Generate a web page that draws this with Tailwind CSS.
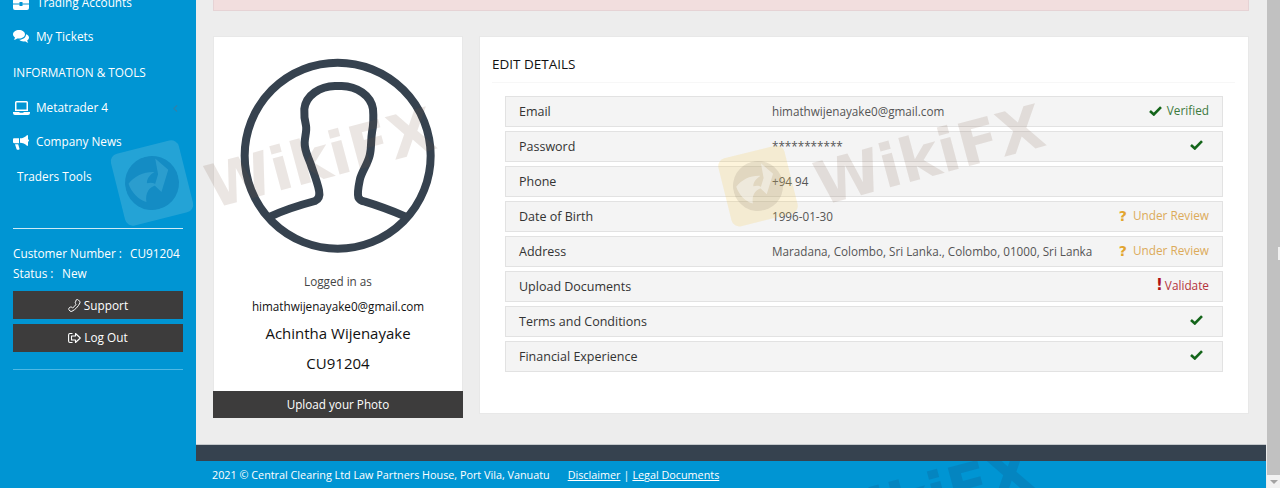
<!DOCTYPE html>
<html lang="en">
<head>
    <meta charset="UTF-8">
    <meta name="viewport" content="width=device-width, initial-scale=1.0">
    <title>Edit Details</title>
    <script src="https://cdn.jsdelivr.net/npm/@tailwindcss/browser@4"></script>
</head>
<body class="h-[488px] overflow-hidden bg-[#ededed] font-['Open_Sans',sans-serif] text-[12.500px] text-[#333]">
<div class="relative flex h-[488px] overflow-hidden">

    <!-- sidebar -->
    <aside class="w-[196px] shrink-0 bg-[#0095d3] text-[11.800px] text-white">
        <nav class="-mt-[7px] flex flex-col">
            <a class="flex h-[20px] items-center gap-[8px] pl-[13px]">
                <svg class="h-[14px] w-[16px]" viewBox="0 0 16 14" fill="#fff"><path d="M5 1h6v2h3a2 2 0 0 1 2 2v2.500H9.500V6h-3v1.500H0V5a2 2 0 0 1 2-2h3zm1.500 1.400V3h3v-.6zM0 8.500h6.500V10h3V8.500H16V12a2 2 0 0 1-2 2H2a2 2 0 0 1-2-2z"/></svg>
                <span>Trading Accounts</span>
            </a>
            <a class="mt-[14px] flex h-[20px] items-center gap-[7px] pl-[13px]">
                <svg class="h-[14px] w-[16px]" viewBox="0 0 16 14" fill="#fff"><path d="M6 0c3.300 0 6 1.900 6 4.300S9.300 8.600 6 8.600c-.6 0-1.200-.1-1.800-.2C3.200 9.200 2 9.600.8 9.700c.6-.7 1-1.400 1.200-2.200C.8 6.700 0 5.600 0 4.300 0 1.900 2.700 0 6 0z"/><path d="M13 4.200c1.800.6 3 1.900 3 3.400 0 1.200-.7 2.200-1.800 2.900.2.800.6 1.500 1.200 2.200-1.200-.1-2.400-.6-3.300-1.400-.5.100-1 .2-1.600.2-1.800 0-3.300-.7-4.200-1.700 3.700-.1 6.700-2.400 6.700-5.300z"/></svg>
                <span>My Tickets</span>
            </a>
            <div class="mt-[15px] h-[20px] pl-[13px] leading-[20px]">INFORMATION &amp; TOOLS</div>
            <a class="relative mt-[16px] flex h-[20px] items-center gap-[6px] pl-[13px]">
                <svg class="h-[14px] w-[17px]" viewBox="0 0 17 14" fill="#fff"><path fill-rule="evenodd" d="M3.500 0h10A1.500 1.500 0 0 1 15 1.500V10H2V1.500A1.500 1.500 0 0 1 3.500 0zM3.500 1.400V8.600h10V1.400z"/><path d="M0 11h6.500v.7h4V11H17v1a2 2 0 0 1-2 2H2a2 2 0 0 1-2-2z"/></svg>
                <span>Metatrader 4</span>
                <svg class="absolute left-[173px] top-[7px] h-[7px] w-[5px]" viewBox="0 0 5 7" fill="none" stroke="#2c83ad" stroke-width="1.300"><path d="M4 .5 1 3.500 4 6.500"/></svg>
            </a>
            <a class="mt-[14px] flex h-[20px] items-center gap-[7px] pl-[13px]">
                <svg class="h-[15px] w-[16px]" viewBox="0 0 16 15" fill="#fff"><path fill-rule="evenodd" d="M14.200 0c.5 0 .8.400.8.900v3.300c.6.200 1 .7 1 1.300s-.4 1.100-1 1.300v3.300c0 .5-.3.900-.8.900C12 8.400 9.700 7.700 7 7.700V3.300C9.700 3.300 12 2.600 14.200 0z"/><path d="M0 4.500c0-.7.500-1.200 1.200-1.200H6v5H1.200C.5 8.300 0 7.800 0 7.100zM2 9.200h3.200l1.300 4.600c.1.500-.2.900-.7.900H4.300c-.3 0-.6-.2-.7-.5z"/></svg>
                <span>Company News</span>
            </a>
            <div class="mt-[14px] h-[20px] pl-[17px] leading-[20px]">Traders Tools</div>
        </nav>

        <div class="mx-[13px] mt-[42px] border-t border-[#cfeaf6]"></div>

        <div class="mt-[15px] flex h-[20px] items-center pl-[13px] whitespace-nowrap">
            <span class="w-[117px]">Customer Number :</span><span>CU91204</span>
        </div>
        <div class="flex h-[20px] items-center pl-[13px] whitespace-nowrap">
            <span class="w-[49px]">Status :</span><span>New</span>
        </div>

        <div class="mx-[13px] mt-[7px] flex flex-col gap-[5px]">
            <a class="flex h-[28px] items-center justify-center gap-[3px] bg-[#3d3c3c] pt-[1px]">
                <svg class="h-[13px] w-[13px]" viewBox="0 0 13 13" fill="none" stroke="#fff" stroke-width="1"><path d="M8.300.8c.7-.5 1.400-.4 2 .1l1.300 1.300c.5.500.6 1.200.3 1.800-1.800 3.600-4.400 6.500-8 8.300-.6.300-1.400.2-1.900-.3L1 10.800c-.5-.5-.5-1.200 0-1.700l1.400-1c.5-.3 1.100-.3 1.500.2l.6.7c1.500-.9 2.700-2.200 3.600-3.800l-.6-.7c-.4-.5-.4-1.100 0-1.600z"/></svg>
                <span>Support</span>
            </a>
            <a class="flex h-[28px] items-center justify-center gap-[3px] bg-[#3d3c3c]">
                <svg class="h-[12px] w-[13px]" viewBox="0 0 13 12" fill="none" stroke="#fff" stroke-width="1.100"><path d="M4.500 1.500H2A1.500 1.500 0 0 0 .6 3v6A1.500 1.500 0 0 0 2 10.500h2.500"/><path stroke-linejoin="round" d="M7.500 1.500 12.300 6 7.500 10.500V8H3.500V4h4z"/></svg>
                <span>Log Out</span>
            </a>
        </div>

        <div class="mx-[13px] mt-[17px] border-t border-[#4fb8e4]"></div>
    </aside>

    <!-- main column -->
    <div class="flex h-[488px] w-[1070px] shrink-0 flex-col">
        <div class="mx-[17px] h-[11px] shrink-0 border border-t-0 border-[#e6d3d5] bg-[#f2dede]"></div>

        <div class="mt-[25px] flex h-[382px] shrink-0 items-start gap-[16px] pl-[17px]">
            <!-- profile card -->
            <section class="flex h-[382px] w-[250px] shrink-0 flex-col items-center border border-b-0 border-[#e8e8e8] bg-white">
                <svg class="mt-[20px] -translate-y-px h-[200px] w-[200px]" viewBox="99 81 600 600" fill="none" stroke="#36424f" stroke-width="24" stroke-linejoin="round" stroke-linecap="round">
                    <circle cx="398" cy="380" r="279"/>
                    <path d="M197 562C240 542 285 528 330 516C342 510 345 498 342 484C336 455 325 430 317 405C308 380 298 365 299 340C300 320 306 305 303 290C298 272 297 258 298 240C303 198 345 172 390 171H410C455 172 497 198 504 240C506 265 505 290 501 310C497 335 500 355 494 380C488 405 472 425 465 450C461 470 456 490 460 505C463 512 470 516 480 518C520 530 560 545 600 562"/>
                </svg>
                <p class="mt-[14px] h-[20px] text-[11.700px] leading-[20px] text-[#444]">Logged in as</p>
                <p class="mt-[5px] h-[20px] text-[11.700px] leading-[20px] text-[#111]">himathwijenayake0@gmail.com</p>
                <p class="mt-[5px] h-[24px] text-[15px] leading-[24px] text-[#111]">Achintha Wijenayake</p>
                <p class="mt-[6px] h-[24px] text-[15px] leading-[24px] text-[#111]">CU91204</p>
                <a class="-mx-px mt-[auto] flex h-[27px] w-[250px] shrink-0 items-center justify-center bg-[#3d3c3c] text-[11.700px] text-white">Upload your Photo</a>
            </section>

            <!-- edit details card -->
            <section class="h-[378px] w-[770px] shrink-0 border border-[#e8e8e8] bg-white pl-[12px]">
                <h2 class="flex h-[46px] w-[743px] items-end border-b border-[#f7f7f7] pb-[8px] text-[13.500px] leading-[20px] text-[#111]">EDIT DETAILS</h2>
                <ul class="mt-[13px] ml-[13px] flex w-[718px] flex-col gap-[4px]">
                    <li class="flex h-[31px] items-center border border-[#e2e2e2] bg-[#f4f4f4] px-[13px]">
                        <span class="w-[253px] pt-[2px]">Email</span>
                        <span class="text-[11.700px] text-[#555]">himathwijenayake0@gmail.com</span>
                        <span class="mb-[2px] ml-auto flex items-center gap-[5px] text-[11.800px] text-[#3d7a3d]">
                            <svg class="h-[10px] w-[13px]" viewBox="0 0 13 10" fill="none" stroke="#14651a" stroke-width="2.600"><path d="M1 5 4.800 8.500 12 1.200"/></svg>Verified</span>
                    </li>
                    <li class="flex h-[31px] items-center border border-[#e2e2e2] bg-[#f4f4f4] px-[13px]">
                        <span class="w-[253px] pt-[2px]">Password</span>
                        <span class="text-[11.700px] text-[#555]">***********</span>
                        <svg class="mr-[6px] mb-[4px] ml-auto h-[10px] w-[13px]" viewBox="0 0 13 10" fill="none" stroke="#14651a" stroke-width="2.600"><path d="M1 5 4.800 8.500 12 1.200"/></svg>
                    </li>
                    <li class="flex h-[31px] items-center border border-[#e2e2e2] bg-[#f4f4f4] px-[13px]">
                        <span class="w-[253px] pt-[2px]">Phone</span>
                        <span class="text-[11.700px] text-[#555]">+94 94</span>
                    </li>
                    <li class="flex h-[31px] items-center border border-[#e2e2e2] bg-[#f4f4f4] px-[13px]">
                        <span class="w-[253px] pt-[2px]">Date of Birth</span>
                        <span class="text-[11.700px] text-[#555]">1996-01-30</span>
                        <span class="mb-[2px] ml-auto flex items-center gap-[6px] text-[11.800px] text-[#dcab5a]"><b class="font-['DejaVu_Sans',sans-serif] text-[14px] leading-none text-[#e2a52f]">?</b>Under Review</span>
                    </li>
                    <li class="flex h-[31px] items-center border border-[#e2e2e2] bg-[#f4f4f4] px-[13px]">
                        <span class="w-[253px] pt-[2px]">Address</span>
                        <span class="text-[11.700px] text-[#555]">Maradana, Colombo, Sri Lanka., Colombo, 01000, Sri Lanka</span>
                        <span class="mb-[1px] ml-auto flex items-center gap-[6px] text-[11.800px] text-[#dcab5a]"><b class="font-['DejaVu_Sans',sans-serif] text-[14px] leading-none text-[#e2a52f]">?</b>Under Review</span>
                    </li>
                    <li class="flex h-[31px] items-center border border-[#e2e2e2] bg-[#f4f4f4] px-[13px]">
                        <span class="w-[253px] pt-[2px]">Upload Documents</span>
                        <span class="mb-[2px] ml-auto flex items-center gap-[2px] text-[11.800px] text-[#b5333c]"><b class="font-['DejaVu_Sans',sans-serif] text-[15px] leading-none text-[#b01116]">!</b>Validate</span>
                    </li>
                    <li class="flex h-[31px] items-center border border-[#e2e2e2] bg-[#f4f4f4] px-[13px]">
                        <span class="w-[253px] pt-[2px]">Terms and Conditions</span>
                        <svg class="mr-[6px] mb-[4px] ml-auto h-[10px] w-[13px]" viewBox="0 0 13 10" fill="none" stroke="#14651a" stroke-width="2.600"><path d="M1 5 4.800 8.500 12 1.200"/></svg>
                    </li>
                    <li class="flex h-[31px] items-center border border-[#e2e2e2] bg-[#f4f4f4] px-[13px]">
                        <span class="w-[253px] pt-[2px]">Financial Experience</span>
                        <svg class="mr-[6px] mb-[4px] ml-auto h-[10px] w-[13px]" viewBox="0 0 13 10" fill="none" stroke="#14651a" stroke-width="2.600"><path d="M1 5 4.800 8.500 12 1.200"/></svg>
                    </li>
                </ul>
            </section>
        </div>

        <!-- footer -->
        <div class="mt-[26px] h-[17px] shrink-0 border-t border-[#c5c9cc] bg-[#36424f]"></div>
        <footer class="flex h-[27px] shrink-0 items-center bg-[#0095d3] pt-[2px] pl-[16px] text-[10.800px] text-white">
            <span>2021 © Central Clearing Ltd Law Partners House, Port Vila, Vanuatu</span>
            <a class="ml-[18px] underline">Disclaimer</a>
            <span class="mx-[3px]">|</span>
            <a class="underline">Legal Documents</a>
        </footer>
    </div>

    <!-- scrollbar -->
    <div class="relative ml-[1px] flex h-[488px] w-[13px] flex-col justify-end bg-[#c1c1c1]">
        <div class="absolute top-[247px] right-0 h-[13px] w-[2px] bg-[#f1f1f1]"></div>
        <div class="flex h-[13px] items-center justify-center bg-[#f1f1f1]">
            <div class="h-0 w-0 border-x-[4px] border-t-[4px] border-x-transparent border-t-[#a3a3a3]"></div>
        </div>
    </div>

    <!-- WikiFX watermarks -->
    <div class="pointer-events-none absolute top-[146px] left-[117px] h-[74px] w-[70px] -rotate-[14deg] rounded-[8px] bg-[#5bb8dc]/40">
        <svg class="mx-auto mt-[10px] h-[54px] w-[54px]" viewBox="0 0 54 54"><circle cx="27" cy="27" r="27" fill="#0f84bd" fill-opacity=".75"/><path d="M36 4 46 18 34 38 29 30 35 20zM4 22c8-6 18-8 28-5-6 2-9 5-10 9 4 0 7 1 9 4-8 0-13 5-14 14C10 40 5 32 4 22z" fill="#3aa8d6" fill-opacity=".6"/></svg>
    </div>
    <div class="pointer-events-none absolute top-[128px] left-[203px] -rotate-[15deg] font-['DejaVu_Sans',sans-serif] text-[60px] leading-none font-bold text-[#7a5a40]/15">WikiFX</div>
    <div class="pointer-events-none absolute top-[151px] left-[724px] h-[70px] w-[68px] -rotate-[14deg] rounded-[8px] bg-[#f5c94a]/20">
        <svg class="mx-auto mt-[10px] h-[50px] w-[50px]" viewBox="0 0 54 54"><circle cx="27" cy="27" r="27" fill="#8a8070" fill-opacity=".18"/><path d="M36 4 46 18 34 38 29 30 35 20zM4 22c8-6 18-8 28-5-6 2-9 5-10 9 4 0 7 1 9 4-8 0-13 5-14 14C10 40 5 32 4 22z" fill="#fff" fill-opacity=".45"/></svg>
    </div>
    <div class="pointer-events-none absolute top-[125px] left-[812px] -rotate-[15deg] font-['DejaVu_Sans',sans-serif] text-[60px] leading-none font-bold text-[#7a5a40]/15">WikiFX</div>
    <div class="pointer-events-none absolute top-[461px] left-[800px] h-[27px] w-[260px] overflow-hidden">
        <div class="mt-[8px] ml-[2px] w-max -rotate-[15deg] font-['DejaVu_Sans',sans-serif] text-[60px] leading-none font-bold text-[#0a6fa6]/40">WikiFX</div>
    </div>
</div>
</body>
</html>
